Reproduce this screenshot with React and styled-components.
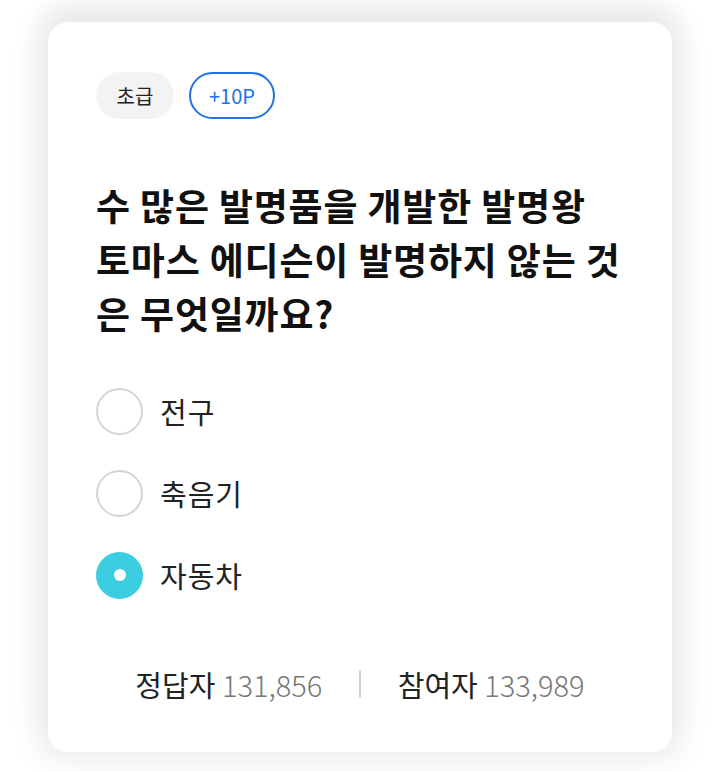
import React from "react";
import styled, { createGlobalStyle } from "styled-components";

const GlobalStyle = createGlobalStyle`
  body {
    margin: 0;
    background: #ffffff;
    font-family: "Noto Sans CJK KR", "Noto Sans", sans-serif;
  }
`;

const options = [
  { id: 1, label: "전구" },
  { id: 2, label: "축음기" },
  { id: 3, label: "자동차" },
];

const App = () => {
  const selected = 3;
  return (
    <Page>
      <GlobalStyle />
      <Card>
        <BadgeRow>
          <Level>초급</Level>
          <Point>+10P</Point>
        </BadgeRow>
        <Question>
          수 많은 발명품을 개발한 발명왕 토마스 에디슨이 발명하지 않는 것은
          무엇일까요?
        </Question>
        <OptionList>
          {options.map((item) => (
            <Option key={item.id}>
              <Radio checked={selected === item.id} />
              <OptionLabel>{item.label}</OptionLabel>
            </Option>
          ))}
        </OptionList>
        <Stats>
          <Stat>
            정답자 <Num>131,856</Num>
          </Stat>
          <Divider />
          <Stat>
            참여자 <Num>133,989</Num>
          </Stat>
        </Stats>
      </Card>
    </Page>
  );
};

export default App;

const Page = styled.div`
  width: 720px;
  height: 771px;
  padding: 22px 48px 0;
  box-sizing: border-box;
  overflow: hidden;
`;
const Card = styled.div`
  background: #fff;
  border-radius: 20px;
  box-shadow: 0 0 28px 14px rgba(0, 0, 0, 0.055),
    0 -14px 30px 6px rgba(0, 0, 0, 0.045);
  height: 730px;
  box-sizing: border-box;
  padding: 50px 48px 0;
  display: flex;
  flex-direction: column;
`;
const BadgeRow = styled.div`
  display: flex;
  gap: 15px;
`;
const Level = styled.span`
  display: inline-flex;
  align-items: center;
  justify-content: center;
  width: 78px;
  height: 47px;
  border-radius: 24px;
  background: #f3f3f3;
  color: #222;
  font-size: 20px;
`;
const Point = styled.span`
  display: inline-flex;
  align-items: center;
  justify-content: center;
  width: 86px;
  height: 47px;
  box-sizing: border-box;
  border-radius: 24px;
  border: 2px solid #2271e6;
  color: #2271e6;
  font-size: 20px;
`;
const Question = styled.h2`
  margin: 59px 0 0;
  font-size: 37px;
  letter-spacing: 0.8px;
  font-weight: 700;
  line-height: 54px;
  color: #111;
  word-break: break-all;
`;
const OptionList = styled.div`
  margin-top: 48px;
  display: flex;
  flex-direction: column;
  gap: 36px;
`;
const Option = styled.div`
  display: flex;
  align-items: center;
  gap: 17px;
  height: 46px;
`;
const Radio = styled.span`
  flex: none;
  width: 47px;
  height: 47px;
  box-sizing: border-box;
  border-radius: 50%;
  border: ${(p) => (p.checked ? "none" : "2px solid #d4d4d4")};
  background: ${(p) => (p.checked ? "#3dcde0" : "#fff")};
  display: flex;
  align-items: center;
  justify-content: center;
  &::after {
    content: "";
    display: ${(p) => (p.checked ? "block" : "none")};
    width: 12px;
    height: 12px;
    border-radius: 50%;
    background: #fff;
  }
`;
const OptionLabel = styled.span`
  font-size: 29px;
  letter-spacing: 1px;
  color: #222;
`;
const Stats = styled.div`
  margin-top: 66px;
  height: 40px;
  display: flex;
  justify-content: center;
  align-items: center;
  gap: 37px;
`;
const Stat = styled.span`
  font-size: 29px;
  color: #222;
`;
const Num = styled.span`
  color: #777;
  font-weight: 300;
`;
const Divider = styled.span`
  width: 1.5px;
  height: 28px;
  background: #d0d0d0;
`;
